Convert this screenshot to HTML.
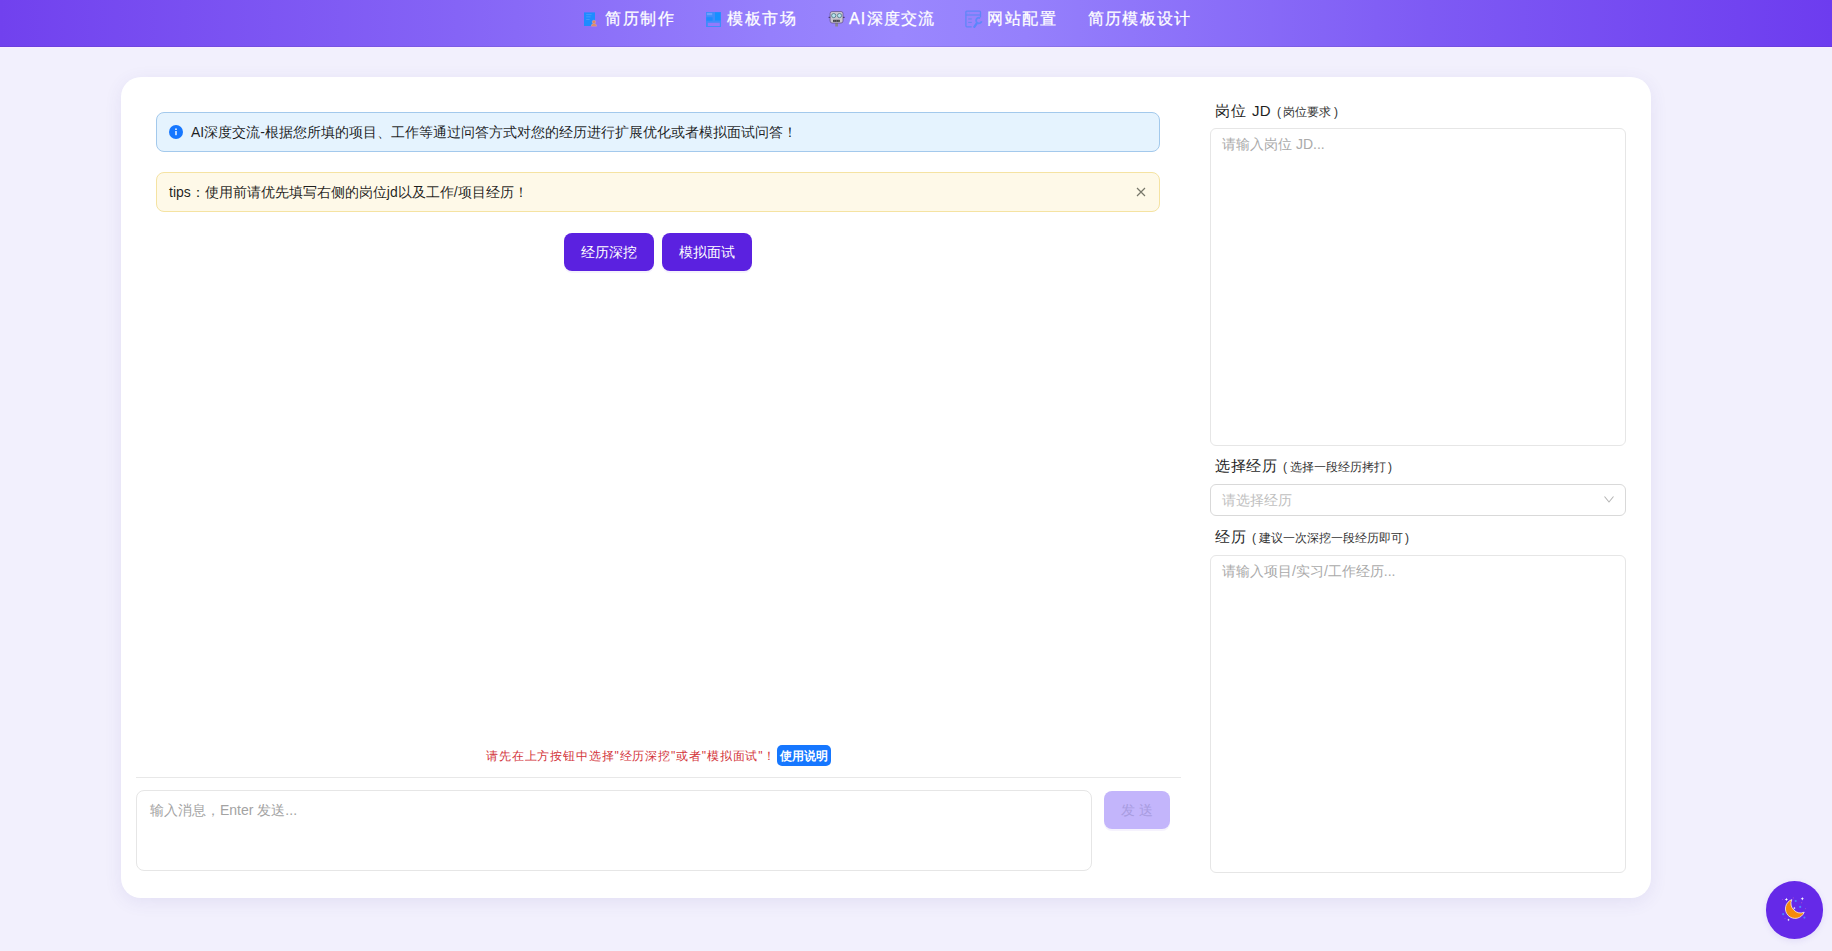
<!DOCTYPE html>
<html><head><meta charset="utf-8">
<style>
*{box-sizing:border-box;margin:0;padding:0}
html,body{width:1832px;height:951px;overflow:hidden}
body{font-family:"Liberation Sans",sans-serif;background:#f2f0fd;position:relative;color:rgba(0,0,0,0.88)}
.hdr{position:absolute;left:0;top:0;width:1832px;height:47px;background:linear-gradient(90deg,#7141ee 0%,#8564f6 25%,#957ffc 42%,#9a87fe 49%,#9580fc 56%,#7e5af4 78%,#6d3cef 100%);box-shadow:inset 0 -1px 0 rgba(60,40,110,0.12),0 1px 0 rgba(255,236,255,0.7)}
.nav{position:absolute;top:11.4px;height:16px;line-height:16px;color:#fff;font-size:16px;letter-spacing:1.6px;white-space:nowrap;-webkit-text-stroke:0.25px #fff}
.ic{position:absolute;display:block}
.card{position:absolute;left:121px;top:77px;width:1530px;height:821px;background:#fff;border-radius:20px;box-shadow:0 4px 18px rgba(80,70,150,0.09)}
.alert{position:absolute;left:156px;width:1004px;height:40px;border-radius:8px;font-size:14px;line-height:22px;padding:8px 12px;display:flex;align-items:center}
.info{top:112px;background:#e5f3fe;border:1px solid #a3c9ec}
.warn{top:172px;background:#fef9e8;border:1px solid #f5e3a2}
.btn{position:absolute;top:233px;height:38px;width:90px;background:#5b21e0;color:#fff;border-radius:8px;font-size:14px;display:flex;align-items:center;justify-content:center;padding-top:1px;box-shadow:0 2px 0 rgba(91,33,224,0.06)}
.lbl{position:absolute;left:1215px;font-size:15px;line-height:20px;color:#1f1f1f;white-space:nowrap;letter-spacing:0.5px}
.lbl small{font-size:12px;color:#333;margin-left:3.5px;letter-spacing:0}
.lbl i{font-style:normal;margin:0 2.5px}
.ta{position:absolute;left:1210px;width:416px;border:1px solid #e6e6e6;border-radius:6px;background:#fff;font-size:14px;line-height:22px;padding:4px 11px;color:#aaa;white-space:nowrap}
</style></head><body>
<div class="hdr"></div>

<!-- nav icons -->
<svg class="ic" style="left:583px;top:11px" width="16" height="17" viewBox="0 0 16 17">
  <rect x="1" y="1.4" width="11" height="13.6" fill="#1e8cff"/>
  <rect x="3.2" y="3.3" width="5.4" height="0.8" fill="#4d9dff"/>
  <rect x="3.2" y="5.5" width="4.4" height="0.8" fill="#4d9dff"/>
  <rect x="3.2" y="8" width="3.4" height="0.8" fill="#4d9dff"/>
  <circle cx="10.9" cy="10.9" r="1.7" fill="#e0895a" stroke="#d9a0c0" stroke-width="0.5"/>
  <path d="M8.3 15.2 Q8.3 12.6 10.9 12.6 Q13.6 12.6 13.6 15.2Z" fill="#e0895a" stroke="#d9a0c0" stroke-width="0.5"/>
</svg>
<div class="nav" style="left:605px">简历制作</div>

<svg class="ic" style="left:705px;top:11px" width="17" height="17" viewBox="0 0 17 17">
  <path fill-rule="evenodd" d="M1 1 H16 V16 H1Z M2.8 11.8 V15 H14.8 V11.8Z" fill="#3f8cfc"/>
  <rect x="1.9" y="1.9" width="5.3" height="2.3" fill="#6aa0ff"/>
  <rect x="1.4" y="6.3" width="6.2" height="3.4" fill="#1f8bff"/>
  <rect x="10" y="1.4" width="5.5" height="8.1" fill="#1590ff"/>
</svg>
<div class="nav" style="left:727px">模板市场</div>

<svg class="ic" style="left:828px;top:10px" width="17" height="17" viewBox="0 0 17 17">
  <rect x="7.2" y="12.5" width="2.8" height="4" fill="#8a8694"/>
  <rect x="2.1" y="1.5" width="12.9" height="11.5" rx="2" fill="#c9c5cf" stroke="#5e4f86" stroke-width="0.7"/>
  <rect x="0.6" y="6.8" width="1.6" height="1.2" fill="#4a3d70"/>
  <rect x="15" y="6.8" width="1.6" height="1.2" fill="#4a3d70"/>
  <circle cx="5.7" cy="5.6" r="2.1" fill="#b5e3f0" stroke="#3f6a74" stroke-width="0.7"/>
  <circle cx="11.5" cy="5.6" r="2.1" fill="#b5e3f0" stroke="#3f6a74" stroke-width="0.7"/>
  <rect x="5.1" y="9.8" width="6.7" height="2.1" fill="#3a3a3e"/>
  <path d="M6.8 9.8V11.9M8.5 9.8V11.9M10.2 9.8V11.9" stroke="#8a8a90" stroke-width="0.5"/>
</svg>
<div class="nav" style="left:849px;letter-spacing:1.2px">AI深度交流</div>

<svg class="ic" style="left:965px;top:10px" width="19" height="19" viewBox="0 0 19 19">
  <path d="M15.5 7.3 V2.2 Q15.5 1.2 14.5 1.2 H1.7 Q0.9 1.2 0.9 2.2 V15.8 Q0.9 16.8 1.9 16.8 H6.7" fill="none" stroke="#5f86f7" stroke-width="1.3"/>
  <rect x="0.9" y="4.4" width="14.6" height="1.2" fill="#5f86f7"/>
  <circle cx="2.6" cy="2.9" r="0.5" fill="#6f8ff7"/><circle cx="4.4" cy="2.9" r="0.5" fill="#6f8ff7"/>
  <rect x="3.2" y="8.4" width="3.6" height="1.1" fill="#6a84f2"/>
  <rect x="3.2" y="11.9" width="3.6" height="1.1" fill="#6a84f2"/>
  <path d="M9.3 16.8 L11.8 13.3" stroke="#5a86fb" stroke-width="2.3" stroke-linecap="round"/>
  <path d="M15.2 8.1 A2.8 2.8 0 1 0 16.6 11.3" fill="none" stroke="#5f88fa" stroke-width="1.8"/>
</svg>
<div class="nav" style="left:987px">网站配置</div>

<div class="nav" style="left:1088px;letter-spacing:1.2px">简历模板设计</div>

<div class="card"></div>

<div class="alert info">
  <svg style="margin-right:8px;flex:none" width="14" height="14" viewBox="0 0 14 14"><circle cx="7" cy="7" r="7" fill="#1677ff"/><rect x="6.3" y="6" width="1.4" height="4.2" fill="#fff"/><circle cx="7" cy="4.2" r="0.85" fill="#fff"/></svg>
  AI深度交流-根据您所填的项目、工作等通过问答方式对您的经历进行扩展优化或者模拟面试问答！
</div>
<div class="alert warn">tips：使用前请优先填写右侧的岗位jd以及工作/项目经历！
  <svg style="position:absolute;left:979px;top:14px" width="10" height="10" viewBox="0 0 10 10"><path d="M1 1 L9 9 M9 1 L1 9" stroke="#77776a" stroke-width="1.15"/></svg>
</div>
<div class="btn" style="left:564px">经历深挖</div>
<div class="btn" style="left:662px">模拟面试</div>

<div style="position:absolute;left:486px;top:748px;font-size:12px;line-height:16px;letter-spacing:0.85px;color:#d3343a;white-space:nowrap">请先在上方按钮中选择"经历深挖"或者"模拟面试"！</div>
<div style="position:absolute;left:777px;top:745px;width:54px;height:21px;border-radius:5px;background:#1677ff;color:#fff;font-size:12px;line-height:22px;text-align:center;font-weight:bold">使用说明</div>

<div style="position:absolute;left:136px;top:777px;width:1045px;height:1px;background:#e8e8e8"></div>
<div class="ta" style="left:136px;top:790px;width:956px;height:81px;padding:8px 13px;color:#a3a3a3;border-radius:8px">输入消息，Enter 发送...</div>
<div class="btn" style="left:1104px;top:791px;width:66px;background:#c3b5fb;color:#a89ce0;letter-spacing:4.8px;padding-left:4.8px">发送</div>

<div class="lbl" style="top:101px">岗位<span style="margin-left:6px;letter-spacing:0.3px">JD</span><small><i>(</i>岗位要求<i>)</i></small></div>
<div class="ta" style="top:128px;height:318px">请输入岗位 JD...</div>
<div class="lbl" style="top:456px">选择经历<small><i>(</i>选择一段经历拷打<i>)</i></small></div>
<div class="ta" style="top:484px;height:32px;color:#bfbfbf;border-color:#d9d9d9">请选择经历
  <svg style="position:absolute;left:392px;top:10px" width="12" height="9" viewBox="0 0 12 9"><path d="M1.5 1.5 L6 7 L10.5 1.5" fill="none" stroke="#b5b5b5" stroke-width="1.1"/></svg>
</div>
<div class="lbl" style="top:527px">经历<small><i>(</i>建议一次深挖一段经历即可<i>)</i></small></div>
<div class="ta" style="top:555px;height:318px">请输入项目/实习/工作经历...</div>

<div style="position:absolute;left:1765.5px;top:881.3px;width:57.5px;height:57.5px;border-radius:50%;background:#6529e8;box-shadow:0 2px 6px rgba(90,60,200,0.10)">
  <svg style="position:absolute;left:14px;top:14px" width="29" height="29" viewBox="0 0 29 29">
    <path d="M11.8 4.6 A9.7 9.7 0 1 0 24.2 17.2 A9.6 9.6 0 0 1 11.8 4.6Z" fill="#f58a0c" stroke="#fff" stroke-width="0.7"/>
    <circle cx="15.7" cy="6" r="1.1" fill="#4f86ff"/>
    <circle cx="20.2" cy="11.9" r="1.1" fill="#4f86ff"/>
    <circle cx="3.2" cy="19.2" r="1.1" fill="#4f7cff"/>
    <circle cx="24.4" cy="22.6" r="1.1" fill="#4f7cff"/>
    <path d="M6.4 2.7 L6.9 3.9 L8.1 4.4 L6.9 4.9 L6.4 6.1 L5.9 4.9 L4.7 4.4 L5.9 3.9Z" fill="#fff"/>
    <path d="M22.3 2 L22.8 3.2 L24 3.7 L22.8 4.2 L22.3 5.4 L21.8 4.2 L20.6 3.7 L21.8 3.2Z" fill="#fff"/>
    <path d="M14.3 11.7 L14.7 12.7 L15.7 13.1 L14.7 13.5 L14.3 14.5 L13.9 13.5 L12.9 13.1 L13.9 12.7Z" fill="#fff"/>
    <path d="M8.5 23.5 L8.9 24.5 L9.9 24.9 L8.9 25.3 L8.5 26.3 L8.1 25.3 L7.1 24.9 L8.1 24.5Z" fill="#fff"/>
    <circle cx="2.5" cy="4.5" r="0.6" fill="#c060c0" opacity="0.6"/>
    <circle cx="13.3" cy="2.9" r="0.6" fill="#c060c0" opacity="0.6"/>
    <circle cx="21.6" cy="7.7" r="0.6" fill="#c060c0" opacity="0.6"/>
    <circle cx="25.5" cy="13.6" r="0.6" fill="#c060c0" opacity="0.6"/>
    <circle cx="5" cy="23.6" r="0.6" fill="#c060c0" opacity="0.6"/>
  </svg>
</div>
</body></html>
